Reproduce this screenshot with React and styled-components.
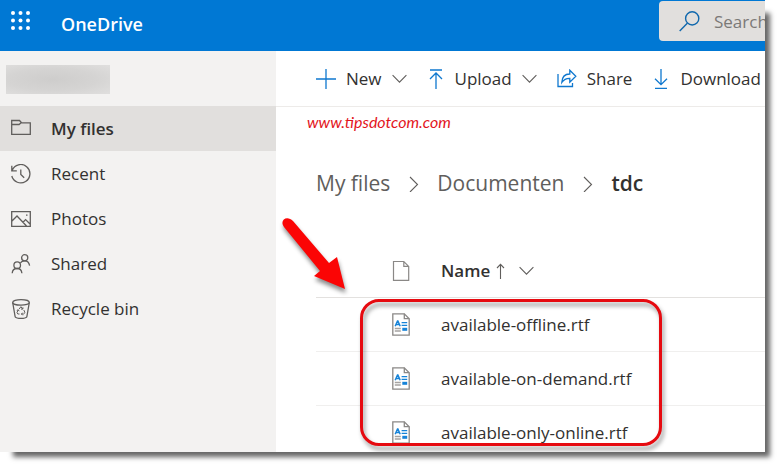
import React from "react";
import styled, { createGlobalStyle } from "styled-components";

const GlobalStyle = createGlobalStyle`
  * { box-sizing: border-box; }
  body {
    margin: 0;
    overflow: hidden;
    background: #fff;
    color: #323130;
    font: 17px/24px "Open Sans", "Noto Sans", sans-serif;
  }
  button, input { font: inherit; color: inherit; }
`;

const Page = styled.div`
  height: 100vh;
  padding: 0 15px 15px 0;
`;

const Window = styled.div`
  height: 100%;
  position: relative;
  display: flex;
  flex-direction: column;
  background: #fff;
  &::after {
    content: "";
    position: absolute;
    inset: 12px 0 0 12px;
    z-index: -1;
    box-shadow: 3px 3px 5px 2px #666;
  }
`;

const Header = styled.header`
  flex: none;
  height: 51px;
  display: flex;
  align-items: center;
  background: #0078d4;
`;

const WaffleButton = styled.button`
  display: flex;
  padding: 0 0 10px 11px;
  border: 0;
  background: none;
`;

const Brand = styled.a`
  margin: 0 auto 4px 30px;
  color: #fff;
  font-size: 18px;
  font-weight: 600;
  text-decoration: none;
`;

const SearchBox = styled.label`
  align-self: flex-start;
  display: flex;
  align-items: center;
  gap: 14px;
  width: 106px;
  height: 40px;
  margin-top: 1px;
  padding-left: 20px;
  border-radius: 4px 0 0 4px;
  background: #e1dfdd;
`;

const SearchInput = styled.input`
  min-width: 0;
  flex: 1;
  height: 40px;
  padding: 0;
  border: 0;
  outline: 0;
  background: none;
  &::placeholder { color: #7b7977; opacity: 1; }
`;

const Body = styled.div`
  flex: 1;
  min-height: 0;
  display: flex;
  overflow: hidden;
`;

const Sidebar = styled.nav`
  flex: none;
  width: 276px;
  background: #f3f2f1;
`;

const AccountName = styled.div`
  width: 104px;
  height: 29px;
  margin: 14px 0 12px 6px;
  background: radial-gradient(ellipse at 45% 50%, #cecdcc 0%, #d5d4d3 55%, #e0dfde 100%);
`;

const NavLink = styled.a`
  display: flex;
  align-items: center;
  gap: 20px;
  height: 45px;
  padding-left: 11px;
  color: inherit;
  text-decoration: none;
  font-weight: ${(p) => (p.$active ? 600 : 400)};
  background: ${(p) => (p.$active ? "#e1dfdd" : "none")};
`;

const Main = styled.main`
  flex: 1;
  min-width: 0;
  overflow: hidden;
`;

const Toolbar = styled.div`
  display: flex;
  align-items: center;
  height: 56px;
  padding-left: 40px;
  gap: 20px;
  border-bottom: 1px solid #edebe9;
`;

const ToolButton = styled.button`
  display: flex;
  align-items: center;
  gap: 10px;
  padding: 0;
  border: 0;
  background: none;
  white-space: nowrap;
`;

const Watermark = styled.p`
  margin: 5px 0 0 31px;
  color: #e3141c;
  font: italic 16px/20px Lato, sans-serif;
`;

const Breadcrumb = styled.nav`
  display: flex;
  align-items: center;
  gap: 18px;
  margin: 35px 0 0 40px;
  font-size: 21px;
  line-height: 32px;
`;

const Crumb = styled.a`
  color: ${(p) => (p.$current ? "#323130" : "#605e5c")};
  font-weight: ${(p) => (p.$current ? 600 : 400)};
  text-decoration: none;
`;

const FileArea = styled.section`
  position: relative;
  margin: 45px 0 0 40px;
`;

const FileTable = styled.table`
  width: 100%;
  border-spacing: 0;
  text-align: left;
`;

const Cell = styled.td`
  height: 54px;
  padding: 0;
  border-bottom: 1px solid #f0efee;
`;

const HeadCell = styled(Cell)`
  border-color: #e3e1df;
  font-weight: 600;
`;

const IconColumn = styled.col`
  width: 125px;
`;

const FileIconSlot = styled.div`
  display: flex;
  padding-left: 76px;
`;

const SortButton = styled.button`
  display: flex;
  align-items: center;
  padding: 0;
  border: 0;
  background: none;
  font-weight: 600;
`;

const SortIcons = styled.span`
  display: flex;
  align-items: center;
  gap: 14px;
  margin-left: 6px;
`;

const FileLink = styled.a`
  color: inherit;
  text-decoration: none;
`;

const Highlight = styled.div`
  position: absolute;
  top: 55px;
  left: 44px;
  width: 302px;
  height: 147px;
  border: 3px solid #e60a10;
  border-radius: 19px;
  filter: drop-shadow(2px 4px 2px rgba(0, 0, 0, 0.4));
  pointer-events: none;
`;

const Arrow = styled.svg`
  position: absolute;
  top: -30px;
  left: -40px;
  filter: drop-shadow(1px 4px 2px rgba(0, 0, 0, 0.45));
  pointer-events: none;
`;

function Icon({ w = 20, h = 20, color = "#605e5c", sw = 1.3, children }) {
  return (
    <svg width={w} height={h} viewBox={`0 0 ${w} ${h}`} fill="none" stroke={color} strokeWidth={sw} aria-hidden="true">
      {children}
    </svg>
  );
}

const Chevron = () => (
  <Icon w={15} h={10} sw={1.1}><path d="M.6 1.2l6.9 6.9 6.9-6.9" /></Icon>
);

const CrumbChevron = () => (
  <Icon w={11} h={18} sw={1.1}><path d="M2 3l7.5 7.5L2 18" /></Icon>
);

const Waffle = () => (
  <svg width="20" height="20" viewBox="0 0 20 20" fill="#fff" aria-hidden="true">
    {[2, 9.5, 17].map((y) => [2, 9.5, 17].map((x) => <circle key={`${x}-${y}`} cx={x} cy={y} r="2" />))}
  </svg>
);

const navIcons = {
  files: <Icon><path d="M.7 15.3V1.5h7.8l2 2.3h8.8v11.5zM.7 5.5h7.4l2-1.7" /></Icon>,
  recent: (
    <Icon>
      <path d="M1.2 6.2A9.2 9.2 0 1 1 .8 12M.8 1.8v5h5M9.8 5.5v4.9l3.4 3.4" />
    </Icon>
  ),
  photos: (
    <Icon>
      <path d="M.7 2.7h18.6v14.6H.7zM1 12l5-5 9.5 10M12 13.2l2.6-2.6 4.4 4.4" />
      <path d="M15 6.2h1.5" />
    </Icon>
  ),
  shared: (
    <Icon>
      <circle cx="13.7" cy="3.8" r="3.1" />
      <circle cx="6.2" cy="11.2" r="3.3" />
      <path d="M1.2 19.3c.2-3 2.2-4.8 5-4.8s4.4 1.8 4.7 4.8M9.4 8.8c1-1.3 2.4-1.9 4.2-1.9 2.8 0 4.5 1.7 5 4.8" />
    </Icon>
  ),
  bin: (
    <Icon>
      <ellipse cx="10" cy="3.4" rx="8.3" ry="2.7" />
      <path d="M1.7 3.5l2.4 14c.4 2.6 11.4 2.6 11.8 0l2.4-14" />
      <path d="M8.2 10l1.7-2.3 1.8 2.3M12.8 11l1.2 2.6-1.5 1.4h-2M8.5 15H6.8L6 13.4l1.3-2.5M11.7 13.7L10.4 15l1.3 1.3M5.8 11.4l1.5-.6.8 1.4M11.9 8.3v1.8h-1.9" strokeWidth="1" />
    </Icon>
  ),
};

const blue = "#0f78cf";
const PlusIcon = () => <Icon color={blue}><path d="M10 0v20M0 10h20" /></Icon>;
const UploadIcon = () => <Icon w={18} color={blue}><path d="M3 1h12M9 20V4M3 10l6-6 6 6" /></Icon>;
const DownloadIcon = () => <Icon w={18} color={blue}><path d="M3 19.3h12M9 0v15.5M3 9.7l6 6 6-6" /></Icon>;
const ShareIcon = () => (
  <Icon color={blue}>
    <path d="M1 5v12.5h14.5V14M4.8 13.5C5 8 8 5 12.8 5V1.2l6 6-6 6V9.4c-3.8-.1-6 1.1-8 4.1z" />
  </Icon>
);
const SearchIcon = () => (
  <Icon w={21} h={21} color="#1068ad" sw={1.4}><circle cx="13.2" cy="7.4" r="6.6" /><path d="M8.3 12.3L.7 20" /></Icon>
);
const PageIcon = () => (
  <Icon w={18} h={22} color="#8a8886" sw={1.2}><path d="M1.5 1.5h10.3l4.9 4.9v14H1.5zM11.8 1.5v4.9h4.9" /></Icon>
);
const SortArrow = () => <Icon w={9} h={16} sw={1.1}><path d="M4.5 16V1.4M1 5l3.5-3.6L8 5" /></Icon>;
const RtfIcon = () => (
  <Icon w={18} h={23} color="#8a8886">
    <path d="M.8.8h11.5l4.9 4.9v16.5H.8z" fill="#fff" />
    <path d="M12.3.8v4.9h4.9" />
    <g stroke="#1683d8">
      <path d="M3.2 13.2L5.5 8h.4l2.3 5.2M4 11.5h3.5" strokeWidth="1.5" />
      <path d="M9.6 9.6h5.6M9.6 12.4h5.6" />
      <path d="M10.3 16.3h4.9" strokeWidth="3" />
    </g>
    <path d="M2.8 15.5h6M2.8 18h6" stroke="#a5a3a1" />
  </Icon>
);

const navItems = [
  ["files", "My files"],
  ["recent", "Recent"],
  ["photos", "Photos"],
  ["shared", "Shared"],
  ["bin", "Recycle bin"],
];

const files = ["available-offline.rtf", "available-on-demand.rtf", "available-only-online.rtf"];

export default function App() {
  return (
    <Page>
      <GlobalStyle />
      <Window>
        <Header>
          <WaffleButton aria-label="App launcher"><Waffle /></WaffleButton>
          <Brand href="#">OneDrive</Brand>
          <SearchBox>
            <SearchIcon />
            <SearchInput type="text" placeholder="Search" aria-label="Search" />
          </SearchBox>
        </Header>
        <Body>
          <Sidebar>
            <AccountName />
            {navItems.map(([key, label], i) => (
              <NavLink key={key} href="#" $active={i === 0}>{navIcons[key]}{label}</NavLink>
            ))}
          </Sidebar>
          <Main>
            <Toolbar>
              <ToolButton><PlusIcon />New<Chevron /></ToolButton>
              <ToolButton><UploadIcon />Upload<Chevron /></ToolButton>
              <ToolButton><ShareIcon />Share</ToolButton>
              <ToolButton><DownloadIcon />Download</ToolButton>
            </Toolbar>
            <Watermark>www.tipsdotcom.com</Watermark>
            <Breadcrumb aria-label="Breadcrumb">
              <Crumb href="#">My files</Crumb>
              <CrumbChevron />
              <Crumb href="#">Documenten</Crumb>
              <CrumbChevron />
              <Crumb href="#" $current>tdc</Crumb>
            </Breadcrumb>
            <FileArea>
              <FileTable>
                <colgroup><IconColumn /><col /></colgroup>
                <thead>
                  <tr>
                    <HeadCell as="th" aria-label="File type"><FileIconSlot><PageIcon /></FileIconSlot></HeadCell>
                    <HeadCell as="th">
                      <SortButton>Name<SortIcons><SortArrow /><Chevron /></SortIcons></SortButton>
                    </HeadCell>
                  </tr>
                </thead>
                <tbody>
                  {files.map((name) => (
                    <tr key={name}>
                      <Cell><FileIconSlot><RtfIcon /></FileIconSlot></Cell>
                      <Cell><FileLink href="#">{name}</FileLink></Cell>
                    </tr>
                  ))}
                </tbody>
              </FileTable>
              <Highlight />
              <Arrow width="80" height="90" viewBox="0 0 80 90" fill="#fb0505">
                <path d="M8 13L44 57l-6 5 31 13-8-32-8 6L17 7C11 1 3 6 8 13z" />
              </Arrow>
            </FileArea>
          </Main>
        </Body>
      </Window>
    </Page>
  );
}
